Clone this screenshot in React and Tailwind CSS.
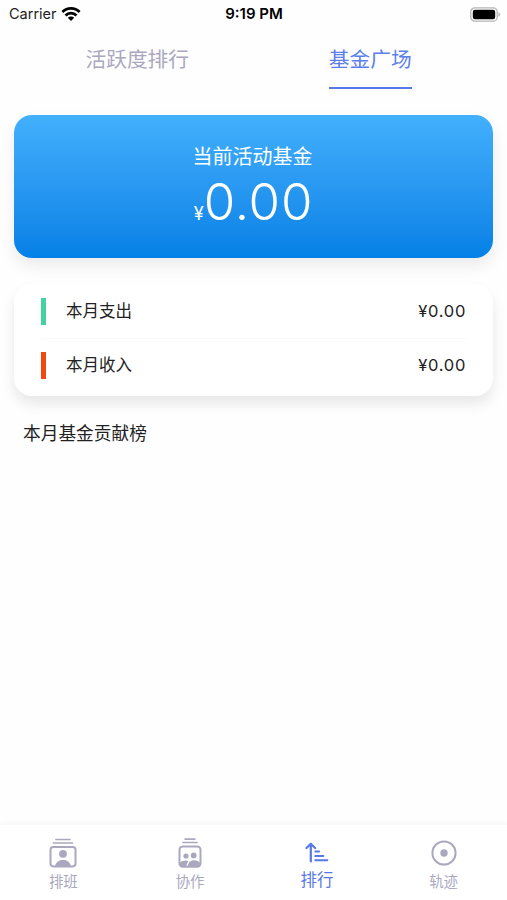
import clsx from 'clsx'

const ENTRIES = [
  { label: '本月支出', amount: '¥0.00', bar: 'bg-[#43d39e]' },
  { label: '本月收入', amount: '¥0.00', bar: 'bg-[#ee4a13]' },
]

const NAV = [
  { label: '排班', icon: ShiftIcon },
  { label: '协作', icon: TeamIcon },
  { label: '排行', icon: RankIcon, active: true },
  { label: '轨迹', icon: TrackIcon },
]

function WifiIcon() {
  return (
    <svg width="20" height="14" viewBox="0 0 20 14" fill="none" stroke="#000" strokeWidth="2.8">
      <path d="M1.4 5a12.2 12.2 0 0 1 17.2 0" />
      <path d="M4.5 8.4a7.8 7.8 0 0 1 11 0" />
      <path d="M10 14 6.8 10.8a4.5 4.5 0 0 1 6.4 0Z" fill="#000" stroke="none" />
    </svg>
  )
}

function BatteryIcon() {
  return (
    <svg width="31" height="15" viewBox="0 0 31 15">
      <rect x="0.8" y="0.8" width="26.4" height="13.4" rx="4" fill="#fff" stroke="#b5b5b5" strokeWidth="1.3" />
      <rect x="2.8" y="2.8" width="22.4" height="9.4" rx="2.2" fill="#000" />
      <path d="M28.5 5.2c2 .6 2 4 0 4.6Z" fill="#b0b0b0" />
    </svg>
  )
}

function ShiftIcon() {
  return (
    <svg width="28" height="30" viewBox="0 0 28 30" fill="none" stroke="currentColor" strokeLinecap="round">
      <path d="M7 1.5h14M4.5 5h19" strokeWidth="1.7" />
      <rect x="1.5" y="9" width="25" height="19.4" rx="2.8" strokeWidth="2" />
      <circle cx="14" cy="15.8" r="3.9" fill="currentColor" stroke="none" />
      <path d="M6 28c1.2-4 4.2-5.9 8-5.9s6.8 1.9 8 5.9Z" fill="currentColor" stroke="none" />
    </svg>
  )
}

function TeamIcon() {
  return (
    <svg width="24" height="30" viewBox="0 0 24 30" fill="none" stroke="currentColor" strokeLinecap="round">
      <path d="M7.2 1.2h9.6M5 4.5h14" strokeWidth="1.7" />
      <rect x="1.5" y="8.5" width="21" height="20.3" rx="3.2" strokeWidth="2" />
      <circle cx="8" cy="18" r="2.6" fill="currentColor" stroke="none" />
      <circle cx="15.7" cy="17.4" r="2.9" fill="currentColor" stroke="none" />
      <path d="M1.7 25c1.3-1.7 3.5-2.5 5.8-2.5 1.3 0 2.3.3 3.1.8-1.3 1.3-2 3-2.1 5.2H5c-2 0-3.3-1.3-3.3-3.5Z" fill="currentColor" stroke="none" />
      <path d="M9.8 28.5c.3-4 2.6-6.2 6.1-6.2 2.5 0 4.8.9 6.4 2.7 0 2.2-1.3 3.5-3.3 3.5Z" fill="currentColor" stroke="none" />
    </svg>
  )
}

function RankIcon() {
  return (
    <svg width="24" height="22" viewBox="0 0 24 22" fill="none" stroke="currentColor" strokeWidth="2.2" strokeLinecap="round" strokeLinejoin="round">
      <path d="M5.8 19.5V2M1.5 6 5.8 1.7 10.1 6" />
      <path d="M10.3 9.5h3.8M10.3 13.9h8M10.3 18.3h12" strokeWidth="2" />
    </svg>
  )
}

function TrackIcon() {
  return (
    <svg width="26" height="26" viewBox="0 0 26 26" fill="none">
      <circle cx="13" cy="13" r="11.6" stroke="currentColor" strokeWidth="2" />
      <circle cx="13" cy="13" r="3.7" fill="currentColor" />
    </svg>
  )
}

function StatusBar() {
  return (
    <div className="grid h-7 grid-cols-3 items-center pl-[9px] pr-[6px] text-[14.5px] text-black">
      <div className="flex items-center gap-[4px]">
        <span className="text-[#222]">Carrier</span>
        <WifiIcon />
      </div>
      <span className="-ml-[2px] text-center text-[15px] font-semibold">9:19 PM</span>
      <div className="flex justify-end"><BatteryIcon /></div>
    </div>
  )
}

export default function App() {
  return (
    <div className="flex h-[900px] w-[507px] flex-col overflow-hidden bg-[#fefefe] font-['Inter','Noto_Sans_CJK_SC',sans-serif] text-[#222]">
      <StatusBar />

      <div className="grid h-[61px] grid-cols-2 px-[21px] text-[20.7px] leading-[55px]">
        <div className="flex justify-center pt-[4px] text-[#aaa8bf]">活跃度排行</div>
        <div className="flex items-start justify-center pl-px pt-[4px]">
          <div className="border-b-2 border-[#5678e8] text-[#5c7fea]">基金广场</div>
        </div>
      </div>

      <main className="flex-1 px-[14px] pt-[26px]">
        <section className="flex h-[143px] flex-col items-center rounded-[18px] bg-linear-to-b from-[#42b0fc] to-[#0280e6] pt-[27px] text-white shadow-[0_8px_16px_rgba(0,0,0,0.08)]">
          <h1 className="mr-[2px] text-[20px] leading-[30px]">当前活动基金</h1>
          <p className="flex items-baseline leading-[60px]">
            <span className="text-[18px]">¥</span>
            <span className="text-[51px] font-[350] tracking-[0.8px]">0.00</span>
          </p>
        </section>

        <section className="mt-[26px] h-[112px] rounded-[18px] bg-white pl-[27px] pr-[27px] shadow-[0_8px_14px_rgba(0,0,0,0.09)]">
          {ENTRIES.map((entry, i) => (
            <div key={entry.label} className={clsx('flex h-[54px] items-center', i > 0 && 'border-t border-[#f9f9f9]')}>
              <span className={clsx('h-[27px] w-[5px]', entry.bar)} />
              <span className="ml-5 flex-1 text-[16.5px]">{entry.label}</span>
              <span className="text-[16.5px] tracking-[0.7px]">{entry.amount}</span>
            </div>
          ))}
        </section>

        <h2 className="mt-[25px] pl-[9px] text-[17.7px] leading-[26px]">本月基金贡献榜</h2>
      </main>

      <nav className="grid h-[75px] grid-cols-4 bg-white shadow-[0_-2px_5px_rgba(0,0,0,0.035)]">
        {NAV.map(({ label, icon: Icon, active }) => (
          <div key={label} className={clsx('flex flex-col items-center pt-[12px]', active ? 'text-[#5678e8]' : 'text-[#aaa8bf]')}>
            <div className="flex h-[31px] items-center"><Icon /></div>
            <span className={active ? 'pt-px text-[16.5px] leading-[22px]' : 'pt-[3px] text-[14.5px] leading-[22px]'}>{label}</span>
          </div>
        ))}
      </nav>
    </div>
  )
}
